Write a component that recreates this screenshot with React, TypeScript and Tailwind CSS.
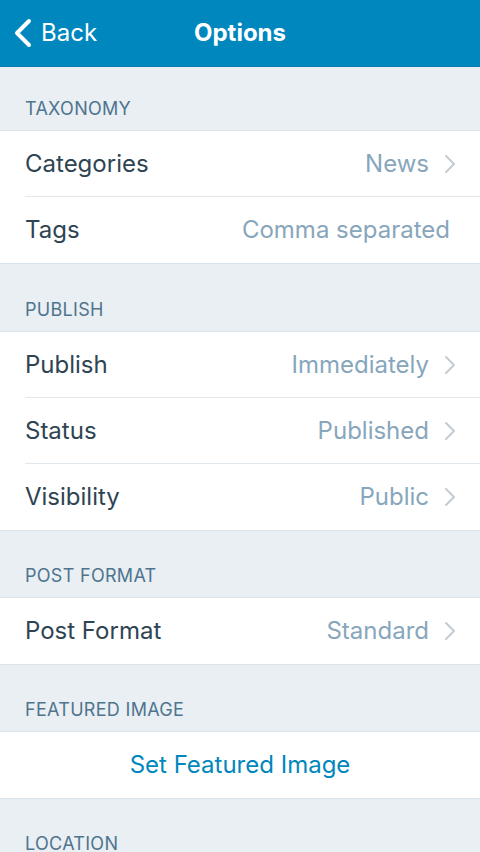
import React from 'react';

const font = { fontFamily: 'Inter, "Noto Sans", sans-serif' };

function Chevron() {
  return (
    <svg width="12" height="20" viewBox="0 0 12 20" className="ml-[15px]">
      <path d="M2 2 L10 10 L2 18" fill="none" stroke="#c3ccd3" strokeWidth="2" strokeLinecap="round" strokeLinejoin="round" />
    </svg>
  );
}

function SectionHeader({ title, h }: { title: string; h: string }) {
  return (
    <div className={`${h} flex items-end px-[25px] pb-[8px] border-b border-[#dae3ea]`}>
      <span className="text-[18px] text-[#4f748e] tracking-[0.3px]">{title}</span>
    </div>
  );
}

function Row({ label, value, chevron = true, last }: { label: string; value: string; chevron?: boolean; last?: boolean }) {
  return (
    <div className="bg-white pl-[25px]">
      <div className={`h-[66px] flex items-center pr-[24px] ${last ? '' : 'border-b border-[#e1e8ed]'}`}>
        <span className="text-[24px] text-[#2e4453] flex-1">{label}</span>
        <span className="text-[24px] text-[#87a6bc]">{value}</span>
        {chevron ? <Chevron /> : <span className="w-[6px]" />}
      </div>
    </div>
  );
}

export default function App() {
  return (
    <div className="w-[480px] h-[852px] overflow-hidden bg-[#e9eff3]" style={font}>
      <div className="h-[67px] bg-[#0087be] flex items-center relative border-b border-[#0a7aab]">
        <div className="flex items-center pl-[13px]">
          <svg width="20" height="30" viewBox="0 0 20 30">
            <path d="M16 3 L4 15 L16 27" fill="none" stroke="white" strokeWidth="4" strokeLinecap="round" strokeLinejoin="round" />
          </svg>
          <span className="text-white text-[24px] ml-[8px]">Back</span>
        </div>
        <span className="absolute left-0 right-0 text-center text-white text-[24px] font-bold pointer-events-none">Options</span>
      </div>

      <SectionHeader title="TAXONOMY" h="h-[64px]" />
      <Row label="Categories" value="News" />
      <Row label="Tags" value="Comma separated" chevron={false} last />

      <div className="border-t border-[#dae3ea]" />
      <SectionHeader title="PUBLISH" h="h-[68px]" />
      <Row label="Publish" value="Immediately" />
      <Row label="Status" value="Published" />
      <Row label="Visibility" value="Public" last />

      <div className="border-t border-[#dae3ea]" />
      <SectionHeader title="POST FORMAT" h="h-[67px]" />
      <Row label="Post Format" value="Standard" last />

      <div className="border-t border-[#dae3ea]" />
      <SectionHeader title="FEATURED IMAGE" h="h-[67px]" />
      <div className="bg-white h-[66px] flex items-center justify-center">
        <span className="text-[24px] text-[#0087be]">Set Featured Image</span>
      </div>

      <div className="border-t border-[#dae3ea]" />
      <SectionHeader title="LOCATION" h="h-[67px]" />
    </div>
  );
}
